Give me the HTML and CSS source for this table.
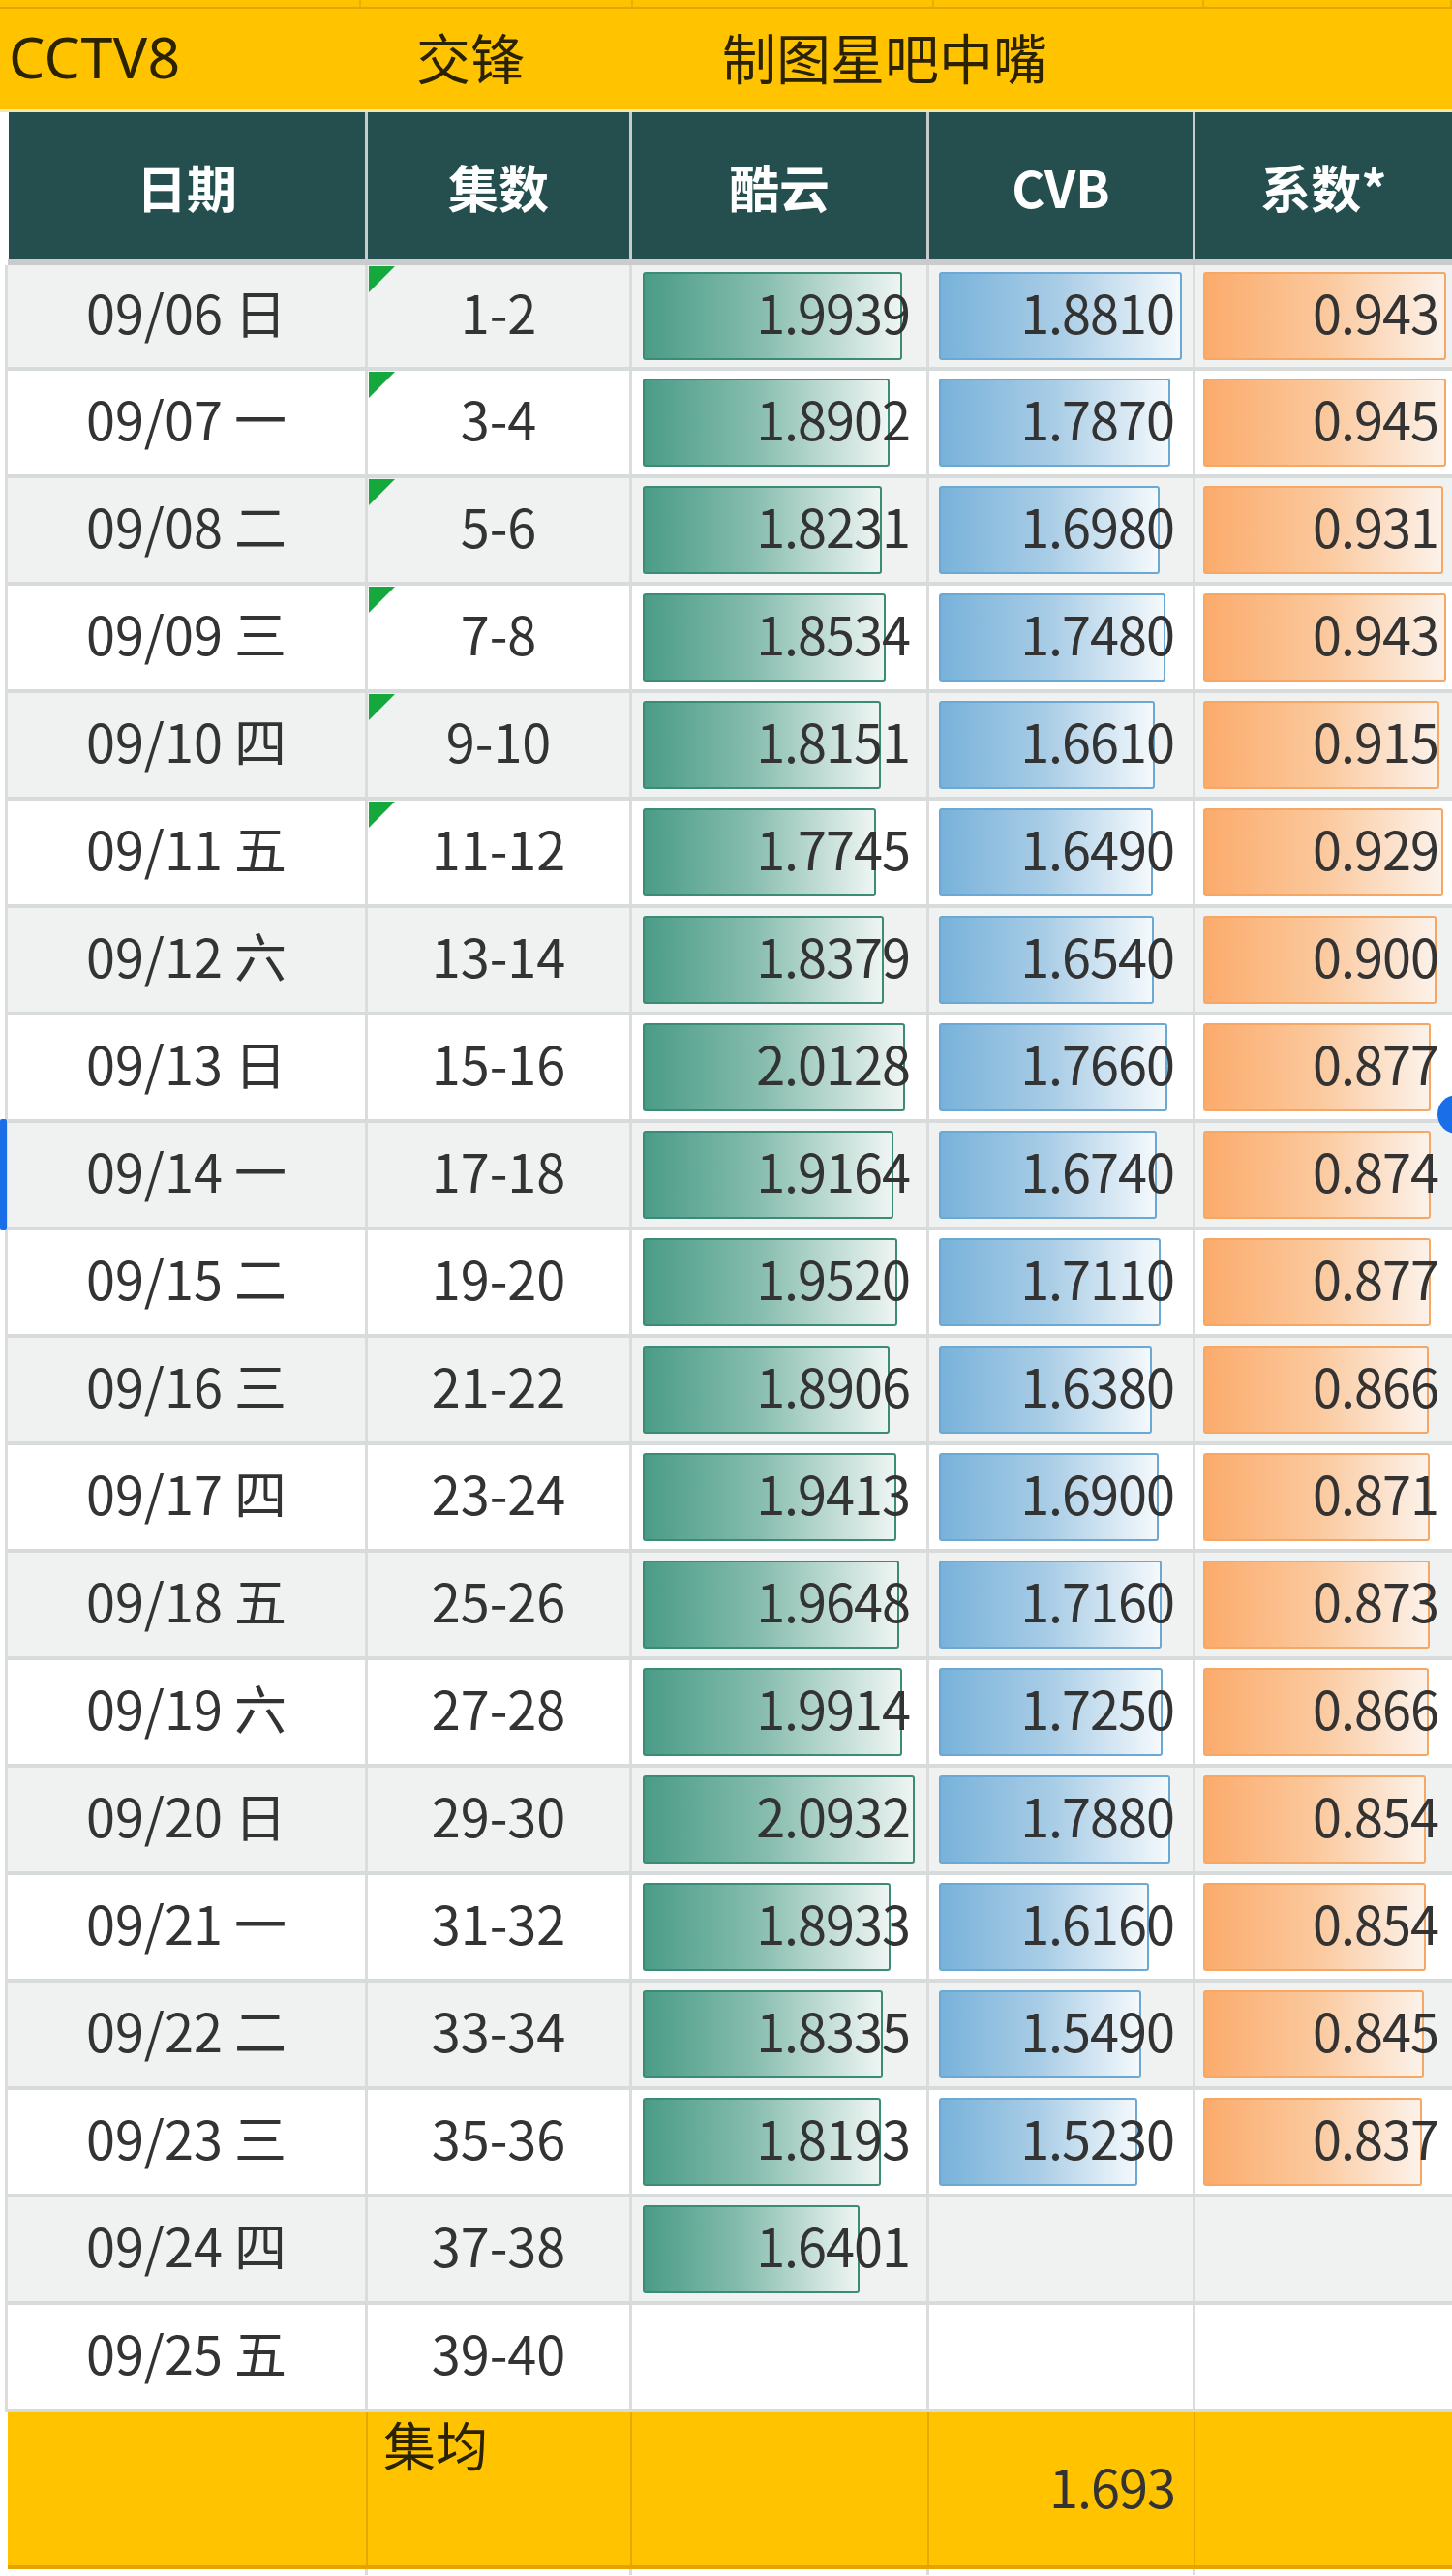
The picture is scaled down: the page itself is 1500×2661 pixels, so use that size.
FILE: index.html
```html
<!DOCTYPE html>
<html lang="zh-CN">
<head>
<meta charset="utf-8">
<title>CCTV8 交锋</title>
<link rel="stylesheet" href="styles.css">
</head>
<body>
<div class="sheet">
  <div class="strip">
    <div class="sc"></div><div class="sc"></div><div class="sc"></div><div class="sc"></div><div class="sc"></div>
  </div>
  <div class="title">
    <div class="tc t1">CCTV8</div>
    <div class="tc t2">交锋</div>
    <div class="tc t3">制图星吧中嘴</div>
  </div>
  <div class="table">
    <div class="hrow">
      <div class="hc">日期</div>
      <div class="hc">集数</div>
      <div class="hc">酷云</div>
      <div class="hc">CVB</div>
      <div class="hc">系数*</div>
    </div>
    <div class="body">
      <div class="row alt first">
        <div class="c">09/06 日</div><div class="c ep mark">1-2</div>
        <div class="c v v3"><span class="bar g" style="width:268px"></span><span class="num">1.9939</span></div>
        <div class="c v v4"><span class="bar b" style="width:251px"></span><span class="num">1.8810</span></div>
        <div class="c v v5"><span class="bar o" style="width:251px"></span><span class="num">0.943</span></div>
      </div>
      <div class="row">
        <div class="c">09/07 一</div><div class="c ep mark">3-4</div>
        <div class="c v v3"><span class="bar g" style="width:255px"></span><span class="num">1.8902</span></div>
        <div class="c v v4"><span class="bar b" style="width:239px"></span><span class="num">1.7870</span></div>
        <div class="c v v5"><span class="bar o" style="width:251px"></span><span class="num">0.945</span></div>
      </div>
      <div class="row alt">
        <div class="c">09/08 二</div><div class="c ep mark">5-6</div>
        <div class="c v v3"><span class="bar g" style="width:247px"></span><span class="num">1.8231</span></div>
        <div class="c v v4"><span class="bar b" style="width:228px"></span><span class="num">1.6980</span></div>
        <div class="c v v5"><span class="bar o" style="width:248px"></span><span class="num">0.931</span></div>
      </div>
      <div class="row">
        <div class="c">09/09 三</div><div class="c ep mark">7-8</div>
        <div class="c v v3"><span class="bar g" style="width:251px"></span><span class="num">1.8534</span></div>
        <div class="c v v4"><span class="bar b" style="width:234px"></span><span class="num">1.7480</span></div>
        <div class="c v v5"><span class="bar o" style="width:251px"></span><span class="num">0.943</span></div>
      </div>
      <div class="row alt">
        <div class="c">09/10 四</div><div class="c ep mark">9-10</div>
        <div class="c v v3"><span class="bar g" style="width:246px"></span><span class="num">1.8151</span></div>
        <div class="c v v4"><span class="bar b" style="width:223px"></span><span class="num">1.6610</span></div>
        <div class="c v v5"><span class="bar o" style="width:244px"></span><span class="num">0.915</span></div>
      </div>
      <div class="row">
        <div class="c">09/11 五</div><div class="c ep mark">11-12</div>
        <div class="c v v3"><span class="bar g" style="width:241px"></span><span class="num">1.7745</span></div>
        <div class="c v v4"><span class="bar b" style="width:221px"></span><span class="num">1.6490</span></div>
        <div class="c v v5"><span class="bar o" style="width:248px"></span><span class="num">0.929</span></div>
      </div>
      <div class="row alt">
        <div class="c">09/12 六</div><div class="c ep">13-14</div>
        <div class="c v v3"><span class="bar g" style="width:249px"></span><span class="num">1.8379</span></div>
        <div class="c v v4"><span class="bar b" style="width:222px"></span><span class="num">1.6540</span></div>
        <div class="c v v5"><span class="bar o" style="width:241px"></span><span class="num">0.900</span></div>
      </div>
      <div class="row">
        <div class="c">09/13 日</div><div class="c ep">15-16</div>
        <div class="c v v3"><span class="bar g" style="width:271px"></span><span class="num">2.0128</span></div>
        <div class="c v v4"><span class="bar b" style="width:236px"></span><span class="num">1.7660</span></div>
        <div class="c v v5"><span class="bar o" style="width:235px"></span><span class="num">0.877</span></div>
      </div>
      <div class="row alt sel">
        <div class="c">09/14 一</div><div class="c ep">17-18</div>
        <div class="c v v3"><span class="bar g" style="width:259px"></span><span class="num">1.9164</span></div>
        <div class="c v v4"><span class="bar b" style="width:225px"></span><span class="num">1.6740</span></div>
        <div class="c v v5"><span class="bar o" style="width:235px"></span><span class="num">0.874</span></div>
      </div>
      <div class="row">
        <div class="c">09/15 二</div><div class="c ep">19-20</div>
        <div class="c v v3"><span class="bar g" style="width:263px"></span><span class="num">1.9520</span></div>
        <div class="c v v4"><span class="bar b" style="width:229px"></span><span class="num">1.7110</span></div>
        <div class="c v v5"><span class="bar o" style="width:235px"></span><span class="num">0.877</span></div>
      </div>
      <div class="row alt">
        <div class="c">09/16 三</div><div class="c ep">21-22</div>
        <div class="c v v3"><span class="bar g" style="width:255px"></span><span class="num">1.8906</span></div>
        <div class="c v v4"><span class="bar b" style="width:220px"></span><span class="num">1.6380</span></div>
        <div class="c v v5"><span class="bar o" style="width:233px"></span><span class="num">0.866</span></div>
      </div>
      <div class="row">
        <div class="c">09/17 四</div><div class="c ep">23-24</div>
        <div class="c v v3"><span class="bar g" style="width:262px"></span><span class="num">1.9413</span></div>
        <div class="c v v4"><span class="bar b" style="width:227px"></span><span class="num">1.6900</span></div>
        <div class="c v v5"><span class="bar o" style="width:234px"></span><span class="num">0.871</span></div>
      </div>
      <div class="row alt">
        <div class="c">09/18 五</div><div class="c ep">25-26</div>
        <div class="c v v3"><span class="bar g" style="width:265px"></span><span class="num">1.9648</span></div>
        <div class="c v v4"><span class="bar b" style="width:230px"></span><span class="num">1.7160</span></div>
        <div class="c v v5"><span class="bar o" style="width:234px"></span><span class="num">0.873</span></div>
      </div>
      <div class="row">
        <div class="c">09/19 六</div><div class="c ep">27-28</div>
        <div class="c v v3"><span class="bar g" style="width:268px"></span><span class="num">1.9914</span></div>
        <div class="c v v4"><span class="bar b" style="width:231px"></span><span class="num">1.7250</span></div>
        <div class="c v v5"><span class="bar o" style="width:233px"></span><span class="num">0.866</span></div>
      </div>
      <div class="row alt">
        <div class="c">09/20 日</div><div class="c ep">29-30</div>
        <div class="c v v3"><span class="bar g" style="width:281px"></span><span class="num">2.0932</span></div>
        <div class="c v v4"><span class="bar b" style="width:239px"></span><span class="num">1.7880</span></div>
        <div class="c v v5"><span class="bar o" style="width:230px"></span><span class="num">0.854</span></div>
      </div>
      <div class="row">
        <div class="c">09/21 一</div><div class="c ep">31-32</div>
        <div class="c v v3"><span class="bar g" style="width:256px"></span><span class="num">1.8933</span></div>
        <div class="c v v4"><span class="bar b" style="width:217px"></span><span class="num">1.6160</span></div>
        <div class="c v v5"><span class="bar o" style="width:230px"></span><span class="num">0.854</span></div>
      </div>
      <div class="row alt">
        <div class="c">09/22 二</div><div class="c ep">33-34</div>
        <div class="c v v3"><span class="bar g" style="width:248px"></span><span class="num">1.8335</span></div>
        <div class="c v v4"><span class="bar b" style="width:209px"></span><span class="num">1.5490</span></div>
        <div class="c v v5"><span class="bar o" style="width:228px"></span><span class="num">0.845</span></div>
      </div>
      <div class="row">
        <div class="c">09/23 三</div><div class="c ep">35-36</div>
        <div class="c v v3"><span class="bar g" style="width:246px"></span><span class="num">1.8193</span></div>
        <div class="c v v4"><span class="bar b" style="width:205px"></span><span class="num">1.5230</span></div>
        <div class="c v v5"><span class="bar o" style="width:226px"></span><span class="num">0.837</span></div>
      </div>
      <div class="row alt">
        <div class="c">09/24 四</div><div class="c ep">37-38</div>
        <div class="c v v3"><span class="bar g" style="width:224px"></span><span class="num">1.6401</span></div>
        <div class="c v v4"></div>
        <div class="c v v5"></div>
      </div>
      <div class="row">
        <div class="c">09/25 五</div><div class="c ep">39-40</div>
        <div class="c v v3"></div>
        <div class="c v v4"></div>
        <div class="c v v5"></div>
      </div>
    </div>
    <div class="frow">
      <div class="fc"></div>
      <div class="fc flabel">集均</div>
      <div class="fc"></div>
      <div class="fc fval">1.693</div>
      <div class="fc"></div>
    </div>
    <div class="tail">
      <div class="tcell"></div><div class="tcell"></div><div class="tcell"></div><div class="tcell"></div><div class="tcell"></div>
    </div>
  </div>
  <div class="handle"></div>
</div>
</body>
</html>
```

FILE: styles.css
```css
* { box-sizing: border-box; }
html, body { margin: 0; padding: 0; background: #fff; }
body { font-family: "Noto Sans CJK SC", "Noto Sans", sans-serif; color: #333; }

.sheet { position: relative; width: 1500px; overflow: hidden; }

/* top partial row */
.strip {
  display: grid;
  grid-template-columns: 373px 281px 311px 279px 256px;
  height: 9px;
  background: #ffc200;
  border-bottom: 2px solid #e2a800;
}
.sc { border-right: 2px solid #e8b000; }

/* title row */
.title {
  display: grid;
  grid-template-columns: 380px 273px 847px;
  height: 107px;
  background: #ffc300;
  border-bottom: 3px solid #f6e6b0;
  align-items: center;
  font-size: 56px;
  color: #2b2200;
  white-space: nowrap;
}
.tc { line-height: 1; padding-bottom: 6px; }
.t1 {
  padding-left: 9px;
  font-family: "Noto Sans", "Noto Sans CJK SC", sans-serif;
  font-size: 59px;
  letter-spacing: 0.5px;
}
.t2 { padding-left: 50px; }
.t3 { padding-left: 93px; }

.table { padding-left: 8px; }

.hrow, .row, .frow, .tail {
  display: grid;
  grid-template-columns: 372px 273px 307px 275px 265px;
}

/* header */
.hrow {
  height: 158px;
  border-bottom: 6px solid #c9cbcd;
}
.hc {
  background: #244f4e;
  color: #fff;
  font-weight: 700;
  font-size: 52px;
  display: flex;
  align-items: center;
  justify-content: center;
  border-right: 3px solid #c8cccc;
}
.hc:first-child { margin-left: 1px; }
.hc:last-child { border-right: none; }

/* body rows */
.body {
  margin-left: -3px;
  border-left: 3px solid #dcdcdc;
}
.row {
  position: relative;
  height: 111px;
  border-bottom: 4px solid #d8dbdb;
  background: #fff;
}
.row.first { height: 109px; }
.row.alt { background: #eff2f1; }
.row.sel::before {
  content: "";
  position: absolute;
  left: -8px;
  top: -4px;
  bottom: -4px;
  width: 7px;
  background: #1a6fe8;
  border-radius: 2px;
}

.c {
  border-right: 3px solid #dcdcdc;
  font-size: 54px;
  display: flex;
  align-items: center;
  justify-content: center;
  white-space: nowrap;
  position: relative;
  padding-bottom: 10px;
}
.c:last-child { border-right: none; }

.mark::before {
  content: "";
  position: absolute;
  left: 1px;
  top: 1px;
  width: 0;
  height: 0;
  border-top: 27px solid #15a83c;
  border-right: 27px solid transparent;
}

/* value cells with data bars */
.v {
  display: grid;
  grid-template-columns: minmax(0, 1fr);
  align-items: center;
  justify-items: stretch;
  padding-bottom: 0;
}
.v3 { padding: 0 17px 0 11px; }
.v4 { padding: 0 19px 0 10px; }
.v5 { padding: 0 14px 0 8px; }

.bar {
  grid-area: 1 / 1;
  justify-self: start;
  height: 91px;
  border-radius: 3px;
}
.bar.g {
  background: linear-gradient(to right, #4a9c87 0%, #85bcad 45%, #eef5f3 100%);
  border: 2px solid #3b8c76;
}
.bar.b {
  background: linear-gradient(to right, #78b2da 0%, #a9cde6 50%, #f4f9fc 100%);
  border: 2px solid #6ba8d4;
}
.bar.o {
  background: linear-gradient(to right, #fbab6c 0%, #fbc89c 50%, #fcf2ea 100%);
  border: 2px solid #f5a763;
}
.num {
  grid-area: 1 / 1;
  justify-self: end;
  position: relative;
  letter-spacing: -1px;
  margin-bottom: 10px;
}

/* footer */
.frow {
  height: 162px;
  border-bottom: 4px solid #e6a300;
  background: #ffc300;
}
.fc {
  border-right: 2px solid #e3ab00;
  font-size: 54px;
  color: #2b2200;
}
.fc:last-child { border-right: none; }
.flabel {
  padding: 1px 0 0 16px;
  line-height: 1.2;
}
.fval {
  display: flex;
  align-items: center;
  justify-content: flex-end;
  padding: 0 19px 8px 0;
  color: #333;
  letter-spacing: -1px;
}

.tail { height: 6px; }
.tcell { border-right: 3px solid #dcdcdc; }
.tcell:last-child { border-right: none; }

/* scroll handle overlay */
.handle {
  position: absolute;
  left: 1485px;
  top: 1131px;
  width: 40px;
  height: 40px;
  border-radius: 50%;
  background: #1a6fe8;
}
```
